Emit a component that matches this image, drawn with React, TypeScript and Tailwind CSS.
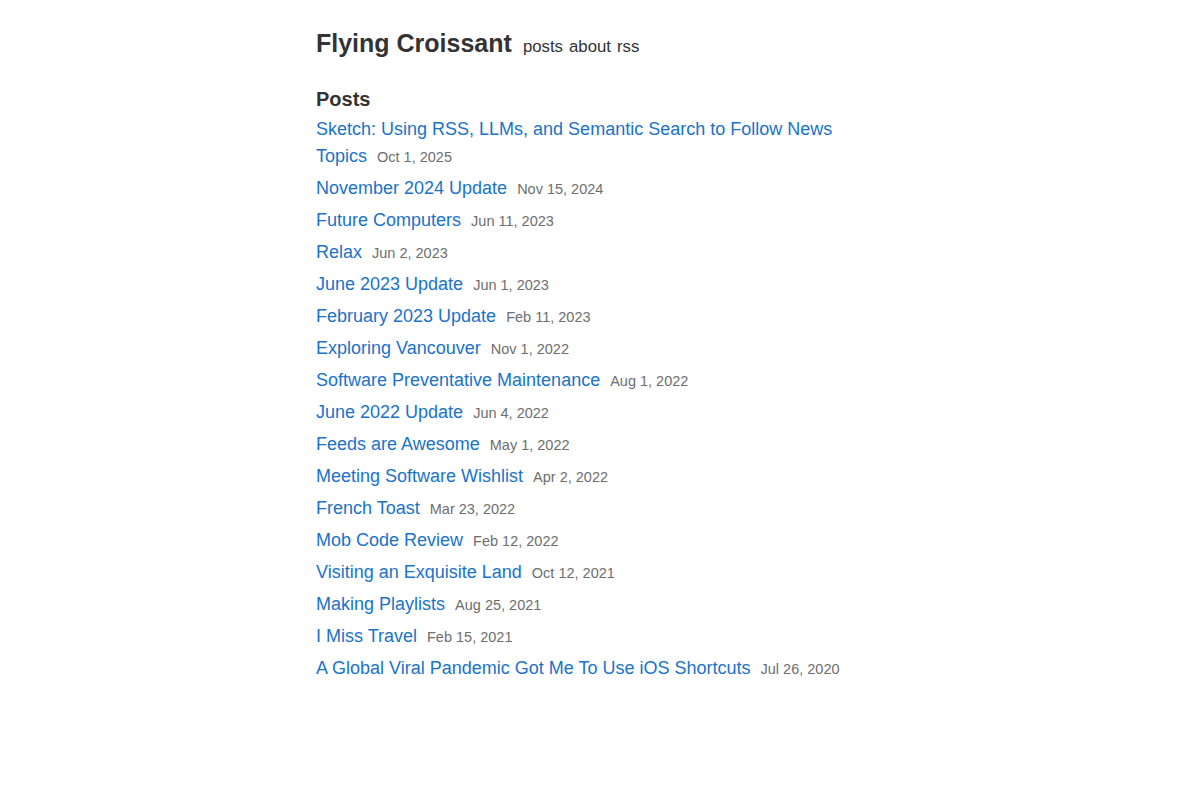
import React from 'react';

const posts: [string, string][] = [
  ['Sketch: Using RSS, LLMs, and Semantic Search to Follow News Topics', 'Oct 1, 2025'],
  ['November 2024 Update', 'Nov 15, 2024'],
  ['Future Computers', 'Jun 11, 2023'],
  ['Relax', 'Jun 2, 2023'],
  ['June 2023 Update', 'Jun 1, 2023'],
  ['February 2023 Update', 'Feb 11, 2023'],
  ['Exploring Vancouver', 'Nov 1, 2022'],
  ['Software Preventative Maintenance', 'Aug 1, 2022'],
  ['June 2022 Update', 'Jun 4, 2022'],
  ['Feeds are Awesome', 'May 1, 2022'],
  ['Meeting Software Wishlist', 'Apr 2, 2022'],
  ['French Toast', 'Mar 23, 2022'],
  ['Mob Code Review', 'Feb 12, 2022'],
  ['Visiting an Exquisite Land', 'Oct 12, 2021'],
  ['Making Playlists', 'Aug 25, 2021'],
  ['I Miss Travel', 'Feb 15, 2021'],
  ['A Global Viral Pandemic Got Me To Use iOS Shortcuts', 'Jul 26, 2020'],
];

export default function App() {
  return (
    <div className="min-h-screen bg-white text-[#333] font-['Liberation_Sans',Arial,sans-serif]">
      <div className="mx-auto w-[568px] pt-[24px]">
        {/* Header */}
        <header className="flex items-baseline gap-[11px]">
          <h1 className="text-[25px] font-bold leading-[38px]">Flying Croissant</h1>
          <nav className="flex gap-[6px] text-[16.8px] text-[#333]">
            <a href="#">posts</a>
            <a href="#">about</a>
            <a href="#">rss</a>
          </nav>
        </header>

        {/* Posts */}
        <h2 className="mt-[24px] text-[20px] font-bold leading-[27px]">Posts</h2>
        <ul className="mt-[3px] flex flex-col gap-[5px]">
          {posts.map(([title, date]) => (
            <li key={title} className="text-[18px] leading-[27px]">
              <a href="#" className="text-[#1a73c7]">{title}</a>
              <span className="ml-[10px] text-[14.5px] leading-none text-[#6e6e6e]">{date}</span>
            </li>
          ))}
        </ul>
      </div>
    </div>
  );
}
